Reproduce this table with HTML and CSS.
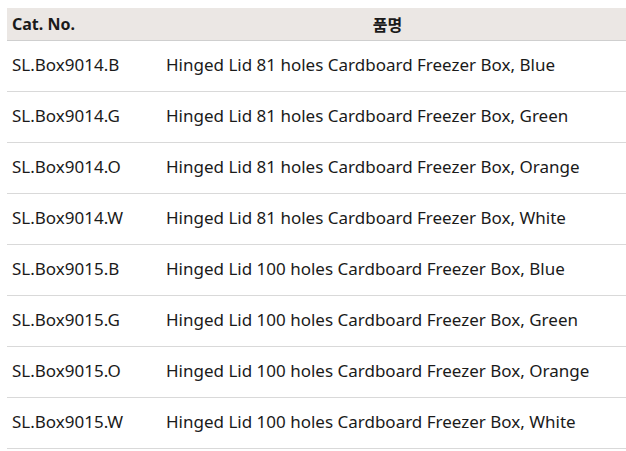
FILE: index.html
```html
<!DOCTYPE html>
<html lang="ko">
<head>
<meta charset="utf-8">
<link rel="stylesheet" href="styles.css">
</head>
<body>
<table class="spec">
  <thead>
    <tr><th class="c1">Cat. No.</th><th class="c2">품명</th></tr>
  </thead>
  <tbody>
    <tr><td>SL.Box9014.B</td><td>Hinged Lid 81 holes Cardboard Freezer Box, Blue</td></tr>
    <tr><td>SL.Box9014.G</td><td>Hinged Lid 81 holes Cardboard Freezer Box, Green</td></tr>
    <tr><td>SL.Box9014.O</td><td>Hinged Lid 81 holes Cardboard Freezer Box, Orange</td></tr>
    <tr><td>SL.Box9014.W</td><td>Hinged Lid 81 holes Cardboard Freezer Box, White</td></tr>
    <tr><td>SL.Box9015.B</td><td>Hinged Lid 100 holes Cardboard Freezer Box, Blue</td></tr>
    <tr><td>SL.Box9015.G</td><td>Hinged Lid 100 holes Cardboard Freezer Box, Green</td></tr>
    <tr><td>SL.Box9015.O</td><td>Hinged Lid 100 holes Cardboard Freezer Box, Orange</td></tr>
    <tr><td>SL.Box9015.W</td><td>Hinged Lid 100 holes Cardboard Freezer Box, White</td></tr>
  </tbody>
</table>
</body>
</html>
```
FILE: styles.css
```css
html, body {
  background: #fff;
}
body {
  margin: 8px 0 0 7px;
  font-family: "Noto Sans", "Noto Sans CJK KR", sans-serif;
  font-size: 17px;
  color: #1a1a1a;
}
.spec {
  width: 619px;
  border-collapse: collapse;
}
.spec th {
  background: #ebe7e4;
  height: 32px;
  padding: 0 5px;
  font-size: 16px;
  font-weight: 700;
  border-bottom: 1px solid #cfcfcf;
  vertical-align: middle;
  line-height: 1;
}
.spec th.c1 {
  text-align: left;
  width: 144px;
}
.spec th.c2 {
  text-align: center;
  padding-right: 17px;
  font-family: "Noto Sans CJK KR", sans-serif;
}
.spec td {
  height: 47px;
  padding: 0 5px 3px;
  border-bottom: 1px solid #d9d9d9;
  vertical-align: middle;
  line-height: 1;
}
```
